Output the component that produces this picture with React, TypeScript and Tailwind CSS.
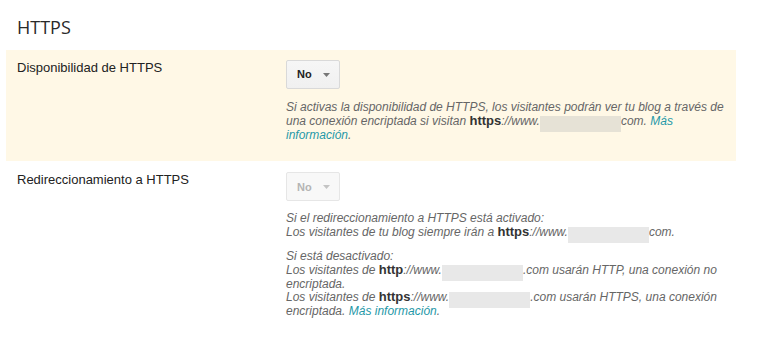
import React from "react";

const Blur = ({ tint }: { tint?: boolean }) => (
  <span
    className={
      "relative top-[2px] inline-block w-[81px] h-[16px] -my-[5px] align-middle blur-[0.6px] " +
      (tint ? "bg-[#e6e2d6]" : "bg-[#e8e8e8]")
    }
  />
);

const Link = ({ children }: { children: React.ReactNode }) => (
  <a href="#" className="text-[#1f98a8]">
    {children}
  </a>
);

const Bold = ({ children }: { children: React.ReactNode }) => (
  <b className="font-bold not-italic text-[#333] text-[13px] leading-[0]">
    {children}
  </b>
);

const Select = ({ disabled }: { disabled?: boolean }) => (
  <div
    className={
      "flex items-center w-[54px] h-[29px] pl-[10px] rounded-[2px] border text-[11px] font-bold " +
      (disabled
        ? "bg-[#f8f8f8] border-[#e6e6e6] text-[#b4b4b4]"
        : "bg-gradient-to-b from-[#f6f6f6] to-[#f0f0f0] border-[#d9d9d9] text-[#222]")
    }
  >
    <span>No</span>
    <svg width="7" height="4" viewBox="0 0 7 4" className="ml-[11px]">
      <path d="M0 0h7L3.5 4z" fill={disabled ? "#c4c4c4" : "#777"} />
    </svg>
  </div>
);

export default function App() {
  return (
    <div className="w-[759px] h-[346px] bg-white font-['Liberation_Sans',Arial,sans-serif]">
      <h2 className="pt-[15px] pl-[17px] mb-[11px] text-[18px] leading-[24px] text-[#2a2a2a] font-['Open_Sans',sans-serif]">
        HTTPS
      </h2>

      <div className="mx-[6px] w-[730px] bg-[#fff8e6] pl-[11px] pt-[10px] pb-[19px] flex">
        <div className="w-[269px] text-[13px] leading-[16px] text-[#222]">
          Disponibilidad de HTTPS
        </div>
        <div>
          <Select />
          <p className="mt-[12px] w-[450px] text-[12px] leading-[13.8px] italic text-[#666]">
            Si activas la disponibilidad de HTTPS, los visitantes podrán ver tu
            blog a través de una conexión encriptada si visitan{" "}
            <Bold>https</Bold>://www.<Blur tint />
            com. <Link>Más información</Link>.
          </p>
        </div>
      </div>

      <div className="mx-[6px] pl-[11px] pt-[11px] flex">
        <div className="w-[269px] text-[13px] leading-[16px] text-[#222]">
          Redireccionamiento a HTTPS
        </div>
        <div>
          <Select disabled />
          <div className="mt-[11px] w-[450px] text-[12px] leading-[13.8px] italic text-[#666]">
            <p>
              Si el redireccionamiento a HTTPS está activado:
              <br />
              Los visitantes de tu blog siempre irán a <Bold>https</Bold>
              ://www.
              <Blur />
              com.
            </p>
            <p className="mt-[10px]">
              Si está desactivado:
              <br />
              Los visitantes de <Bold>http</Bold>://www.
              <Blur />
              .com usarán HTTP, una conexión no encriptada.
              <br />
              Los visitantes de <Bold>https</Bold>://www.
              <Blur />
              .com usarán HTTPS, una conexión encriptada.{" "}
              <Link>Más información</Link>.
            </p>
          </div>
        </div>
      </div>
    </div>
  );
}
